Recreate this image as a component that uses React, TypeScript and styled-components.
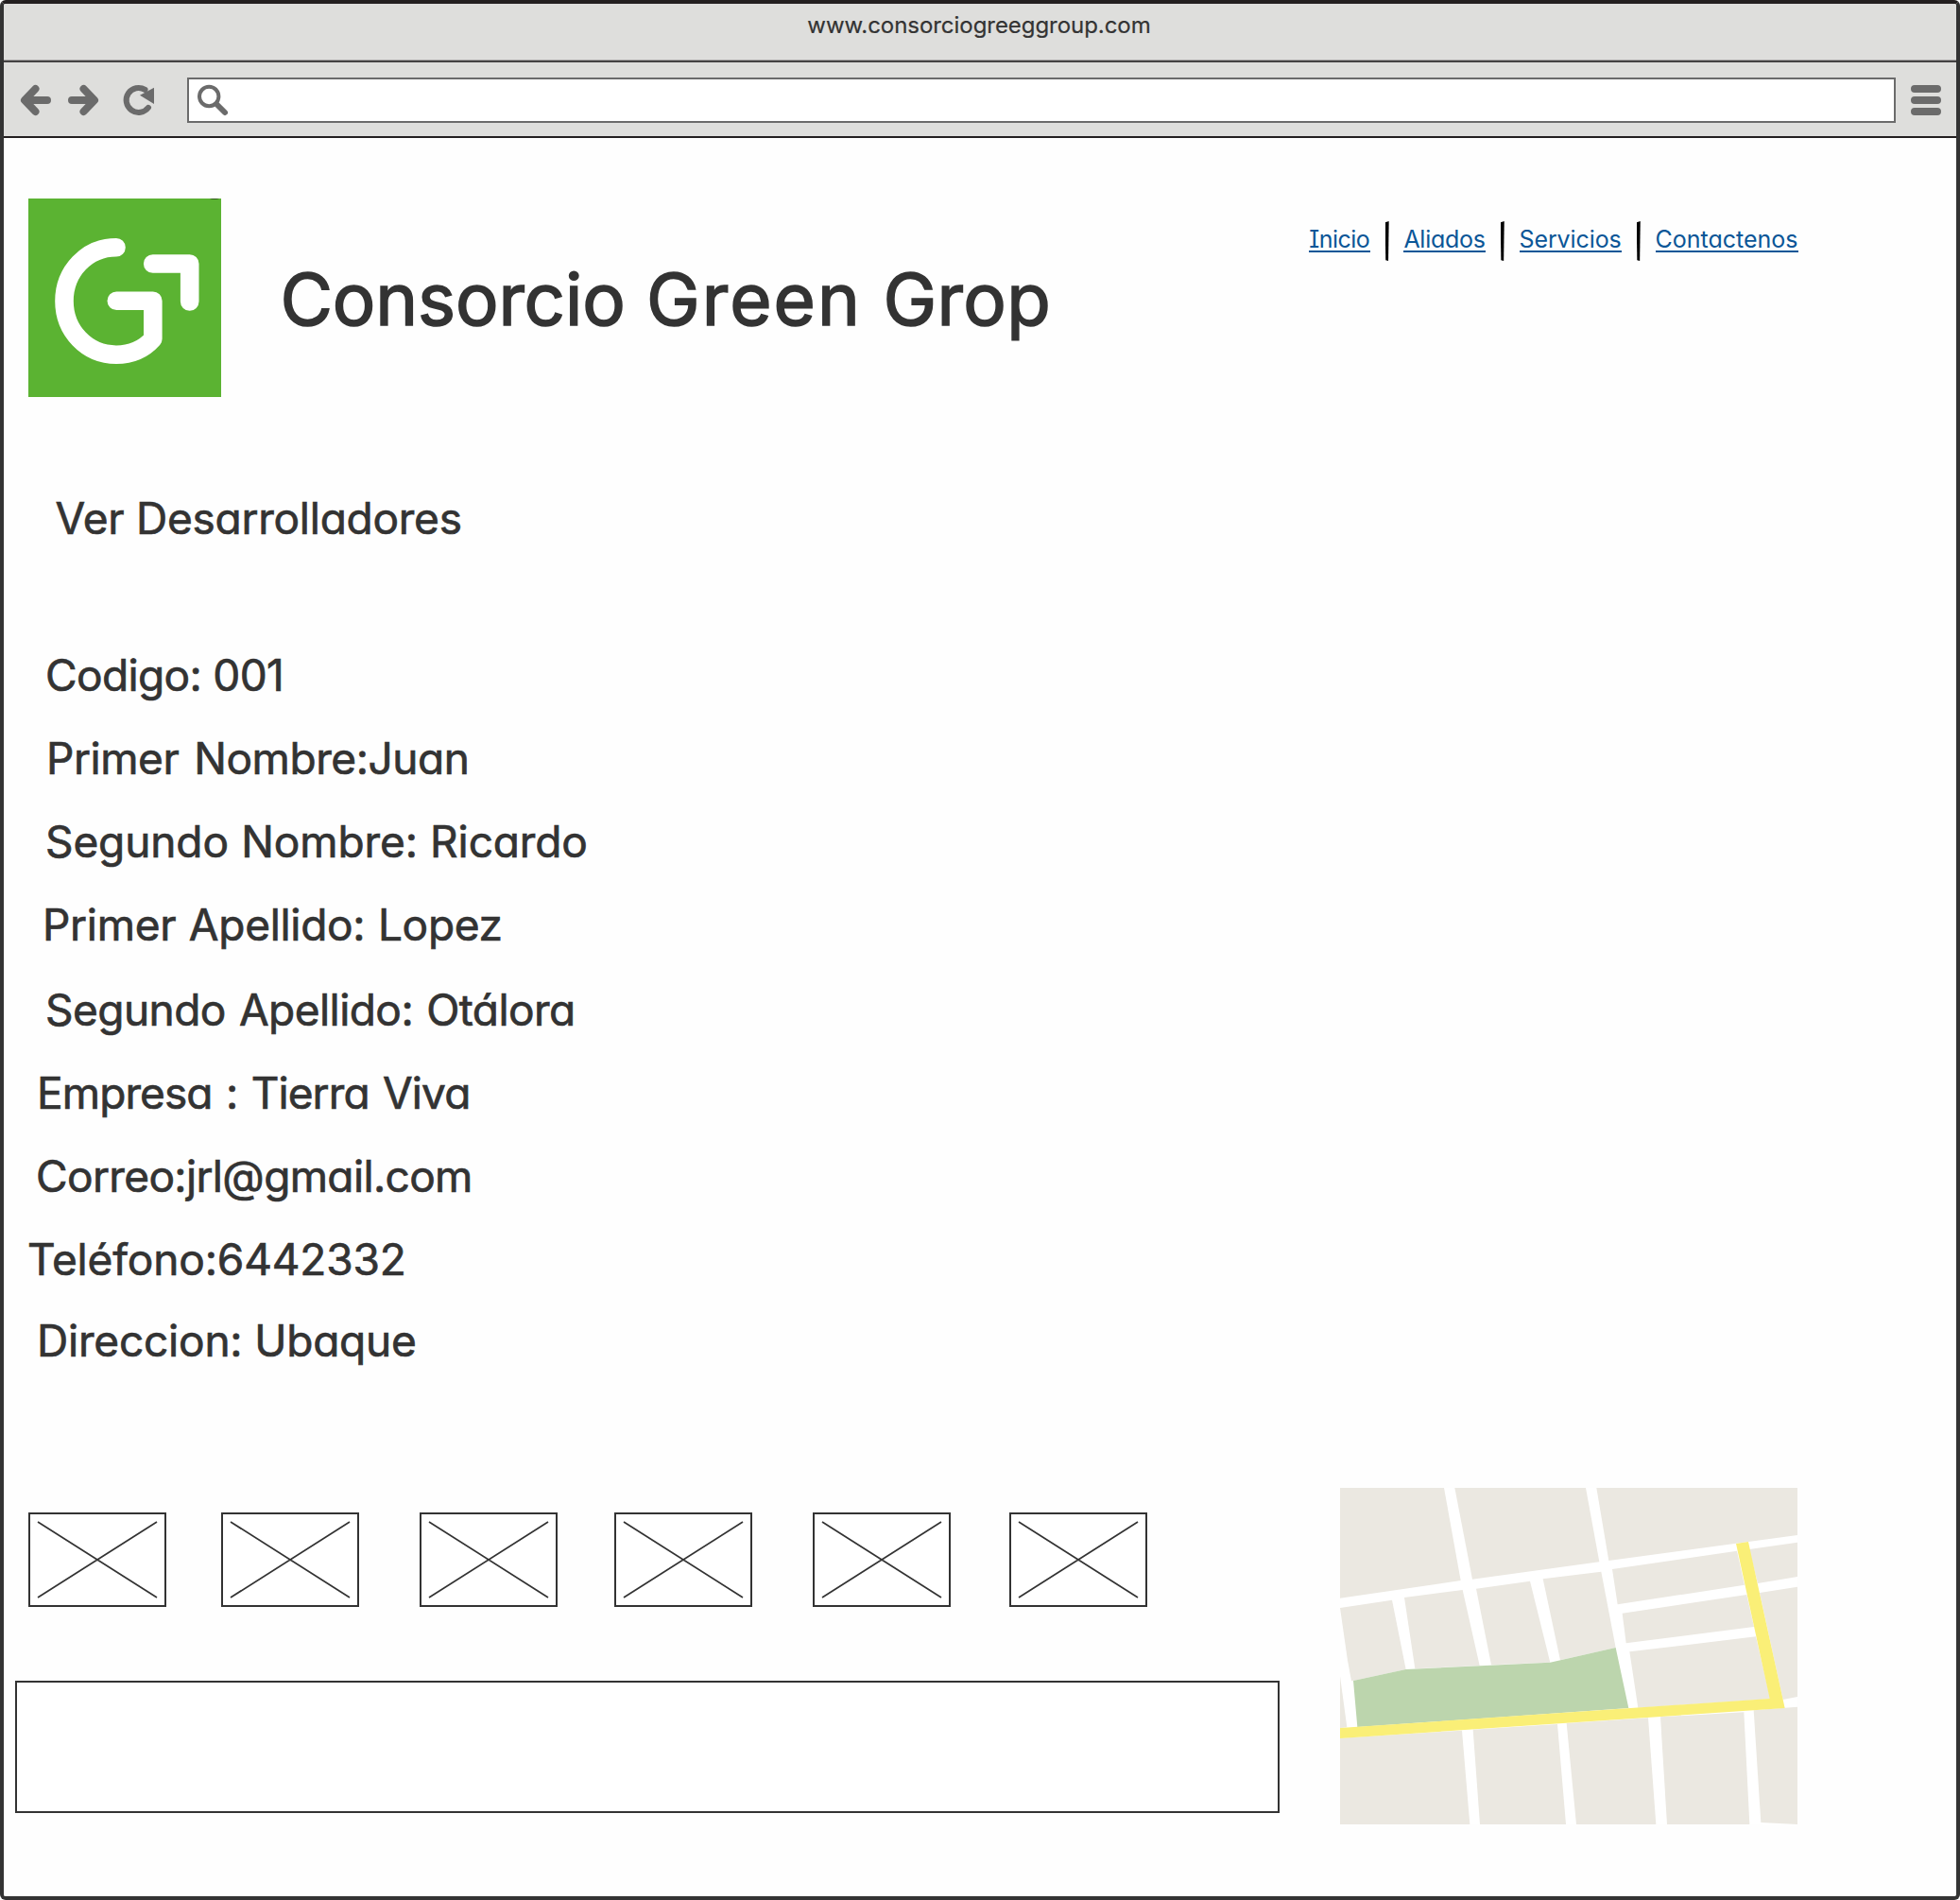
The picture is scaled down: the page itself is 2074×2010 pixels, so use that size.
import React from "react";
import styled, { createGlobalStyle } from "styled-components";

const ink = "#333333";
const frame = "#231f20";
const chrome = "#dededc";
const iconGrey = "#6b6b6b";
const linkBlue = "#0a5697";

const GlobalStyle = createGlobalStyle`
  *, *::before, *::after { box-sizing: border-box; }
  html, body { margin: 0; background: #fff; }
  body {
    font-family: Inter, "Liberation Sans", sans-serif;
    font-feature-settings: "cv11" 1, "calt" 0;
    color: ${ink};
  }
`;

const Window = styled.div`
  display: flex;
  flex-direction: column;
  width: 2074px;
  height: 2010px;
  border: 4px solid ${ink};
  border-top-color: ${frame};
  border-radius: 6px;
  overflow: hidden;
`;

const TitleBar = styled.header`
  height: 62px;
  padding-right: 2px;
  background: ${chrome};
  border-bottom: 2px solid #454344;
  box-shadow: inset 0 -1px 0 #aaa9a8;
  text-align: center;
  font-size: 24px;
  line-height: 46px;
  letter-spacing: -0.05px;
  -webkit-text-stroke: 0.2px ${ink};
`;

const Toolbar = styled.div`
  display: flex;
  align-items: center;
  height: 80px;
  padding: 2px 16px 0 18px;
  background: ${chrome};
  border-bottom: 2px solid ${frame};
`;

const NavIcons = styled.div`
  display: grid;
  grid-template-columns: 50px 59px 67px;
`;

const AddressBar = styled.div`
  display: flex;
  align-items: center;
  flex: 1;
  height: 48px;
  margin-right: 16px;
  padding-left: 9px;
  background: #fff;
  border: 2px solid ${iconGrey};
`;

const Icon = styled.svg`
  display: block;
  width: 32px;
  height: 32px;
  overflow: visible;
  fill: none;
  stroke: ${iconGrey};
  stroke-linecap: round;
  stroke-linejoin: round;
`;

const Page = styled.main`
  display: flex;
  flex-direction: column;
  flex: 1;
  padding-top: 64px;
  background: #fefefe;
`;

const Masthead = styled.div`
  display: flex;
  align-items: flex-start;
  height: 210px;
  padding: 0 167px 0 26px;
`;

const Logo = styled.svg`
  display: block;
  width: 204px;
  height: 210px;
  background: #5bb332;
`;

const SiteTitle = styled.h1`
  margin: 66px 0 0 62.5px;
  font-size: 76px;
  font-weight: 400;
  line-height: 80px;
  white-space: nowrap;
  word-spacing: 1px;
  -webkit-text-stroke: 1.6px ${ink};
`;

const Word = styled.span<{ $tracking: number }>`
  letter-spacing: ${(p) => p.$tracking}px;
`;

const Links = styled.nav`
  display: flex;
  gap: 15.75px;
  margin: 24px 0 0 auto;
`;

const Link = styled.a<{ $width: number; $tracking: number; $serifI?: boolean }>`
  width: ${(p) => p.$width}px;
  height: 28px;
  margin-top: 5px;
  color: ${linkBlue};
  border-bottom: 2px solid ${linkBlue};
  font-size: 25px;
  line-height: 28px;
  letter-spacing: ${(p) => p.$tracking}px;
  text-decoration: none;
  white-space: nowrap;
  font-feature-settings: "cv11" 1, "calt" 0, "cv08" ${(p) => (p.$serifI ? 1 : 0)};
`;

const Divider = styled.span`
  width: 4px;
  height: 42px;
  background: #000;
  clip-path: polygon(0 3%, 100% 0, 85% 100%, 15% 98%);
`;

const SectionTitle = styled.h2`
  margin: 88px 0 0;
  padding-left: 54.5px;
  font-size: 46px;
  font-weight: 400;
  line-height: 80px;
  letter-spacing: -0.25px;
  -webkit-text-stroke: 0.7px ${ink};
`;

const Details = styled.ul`
  display: grid;
  grid-template-rows: repeat(4, 88px) 90px repeat(3, 88px) 86px;
  align-items: end;
  margin: 78px 0 0;
  padding: 0;
  list-style: none;
`;

const Detail = styled.li<{ $indent: number; $tracking: number; $gap?: number }>`
  padding-left: ${(p) => p.$indent}px;
  font-size: 46px;
  line-height: 80px;
  letter-spacing: ${(p) => p.$tracking}px;
  word-spacing: ${(p) => p.$gap ?? 0}px;
  white-space: nowrap;
  -webkit-text-stroke: 0.7px ${ink};
`;

const Footer = styled.footer`
  display: grid;
  grid-template-columns: 1414px 484px;
  margin-top: 116px;
`;

const Gallery = styled.div`
  padding: 26px 64px 0 12px;
`;

const Photos = styled.div`
  display: grid;
  grid-template-columns: 204px 210px 206px 210px 208px 146px;
  padding-left: 14px;
`;

const Photo = styled.svg`
  display: block;
  width: 146px;
  height: 100px;
  fill: #fff;
  stroke: ${ink};
  stroke-width: 2;
`;

const TextPanel = styled.div`
  height: 140px;
  margin-top: 78px;
  background: #fff;
  border: 2px solid ${ink};
`;

const Map = styled.svg`
  display: block;
  width: 484px;
  height: 356px;
  background: #fff;
`;

const links = [
  { label: "Inicio", width: 64.6, tracking: -0.55, serifI: true },
  { label: "Aliados", width: 86.6, tracking: -0.28 },
  { label: "Servicios", width: 108.5, tracking: -0.1 },
  { label: "Contactenos", width: 151.5, tracking: 0 },
];

const details = [
  { text: "Codigo: 001", indent: 44, tracking: -0.65 },
  { text: "Primer Nombre:Juan", indent: 45, tracking: -0.45, gap: 3.5 },
  { text: "Segundo Nombre: Ricardo", indent: 44, tracking: -0.11, gap: 0.5 },
  { text: "Primer Apellido: Lopez", indent: 41, tracking: -0.3, gap: 1 },
  { text: "Segundo Apellido: Otálora", indent: 44, tracking: -0.55, gap: 1.7 },
  { text: "Empresa : Tierra Viva", indent: 35, tracking: -0.9, gap: 2.3 },
  { text: "Correo:jrl@gmail.com", indent: 34, tracking: -0.64 },
  { text: "Teléfono:6442332", indent: 25, tracking: -0.15 },
  { text: "Direccion: Ubaque", indent: 35, tracking: -0.2 },
];

const blocks = [
  "54,42 384,42 437,336 54,392",
  "418,42 834,42 877,277 474,332",
  "868,42 1506,42 1506,192 907,273",
  "54,423 219,398 263,618 96,654 90,655 78,590",
  "54,640 76,802 54,804",
  "258,390 443,366 497,606 292,616",
  "486,362 657,338 721,596 534,604",
  "698,331 883,308 929,549 753,589",
  "918,300 1314,242 1338,350 935,412",
  "1353,237 1506,215 1506,324 1380,345",
  "950,440 1345,381 1368,483 962,535",
  "1386,375 1506,356 1506,705 1460,714",
  "973,562 1374,514 1420,712 1000,740",
  "54,836 441,812 466,1110 54,1110",
  "476,809 744,792 771,1110 498,1110",
  "773,789 1032,772 1057,1110 804,1110",
  "1071,769 1336,754 1354,1110 1092,1110",
  "1367,748 1506,737 1506,1110 1390,1104",
];

const StreetMap = () => (
  <Map viewBox="54 42 1452 1068" preserveAspectRatio="none">
    {blocks.map((points) => (
      <polygon key={points} points={points} fill="#ebe8e1" />
    ))}
    <polygon points="96,654 263,618 721,596 929,549 970,741 109,801" fill="#bcd5ad" />
    <polygon points="54,804 1418,711 1311,219 1350,213 1466,741 54,837" fill="#faef77" />
  </Map>
);

export default function App() {
  return (
    <Window>
      <GlobalStyle />
      <TitleBar>www.consorciogreeggroup.com</TitleBar>
      <Toolbar>
        <NavIcons>
          <Icon viewBox="0 0 32 32" strokeWidth="8">
            <path d="M15.5 4 4 16 15.5 28M6 16H28" />
          </Icon>
          <Icon viewBox="0 0 32 32" strokeWidth="8">
            <path d="M16.5 4 28 16 16.5 28M26 16H4" />
          </Icon>
          <Icon viewBox="0 0 32 32" strokeWidth="6">
            <path d="M22.5 4.9A13 13 0 1 0 26 23.8" />
            <path d="M17 10.7 32 2.7V20Z" fill={iconGrey} stroke="none" />
          </Icon>
        </NavIcons>
        <AddressBar>
          <Icon viewBox="0 0 32 32" strokeWidth="4">
            <circle cx="12.2" cy="12" r="10.2" />
            <path d="M20.5 20.5 29 29" strokeWidth="6" />
          </Icon>
        </AddressBar>
        <Icon viewBox="0 0 32 32" strokeWidth="8">
          <path d="M4 4H28M4 16H28M4 28H28" />
        </Icon>
      </Toolbar>

      <Page>
        <Masthead>
          <Logo viewBox="0 0 204 210" fill="none" stroke="#fff" strokeLinecap="round" strokeLinejoin="round" strokeWidth="19.6">
            <path d="M93 51.7C62 51.7 38 77 38 108.5S62 165.2 93 165.2C108 165.2 122 159.5 131.8 148.5V108.3H93.3" />
            <path d="M131.7 69H170.7V109" />
            <path d="M193 0Q197 1 201 0Z" fill="#2c4a1c" stroke="#2c4a1c" strokeWidth="0.6" />
          </Logo>
          <SiteTitle>
            <Word $tracking={-0.15}>Consorcio</Word> <Word $tracking={2.1}>Green</Word>{" "}
            <Word $tracking={0.4}>Grop</Word>
          </SiteTitle>
          <Links>
            {links.map((link, i) => (
              <React.Fragment key={link.label}>
                {i > 0 && <Divider />}
                <Link $width={link.width} $tracking={link.tracking} $serifI={link.serifI}>
                  {link.label}
                </Link>
              </React.Fragment>
            ))}
          </Links>
        </Masthead>

        <SectionTitle>Ver Desarrolladores</SectionTitle>

        <Details>
          {details.map((row) => (
            <Detail key={row.text} $indent={row.indent} $tracking={row.tracking} $gap={row.gap}>
              {row.text}
            </Detail>
          ))}
        </Details>

        <Footer>
          <Gallery>
            <Photos>
              {[0, 1, 2, 3, 4, 5].map((n) => (
                <Photo key={n} viewBox="0 0 146 100">
                  <rect x="1" y="1" width="144" height="98" />
                  <path d="M10 10 136 90M136 10 10 90" strokeWidth="1.7" />
                </Photo>
              ))}
            </Photos>
            <TextPanel />
          </Gallery>
          <StreetMap />
        </Footer>
      </Page>
    </Window>
  );
}
